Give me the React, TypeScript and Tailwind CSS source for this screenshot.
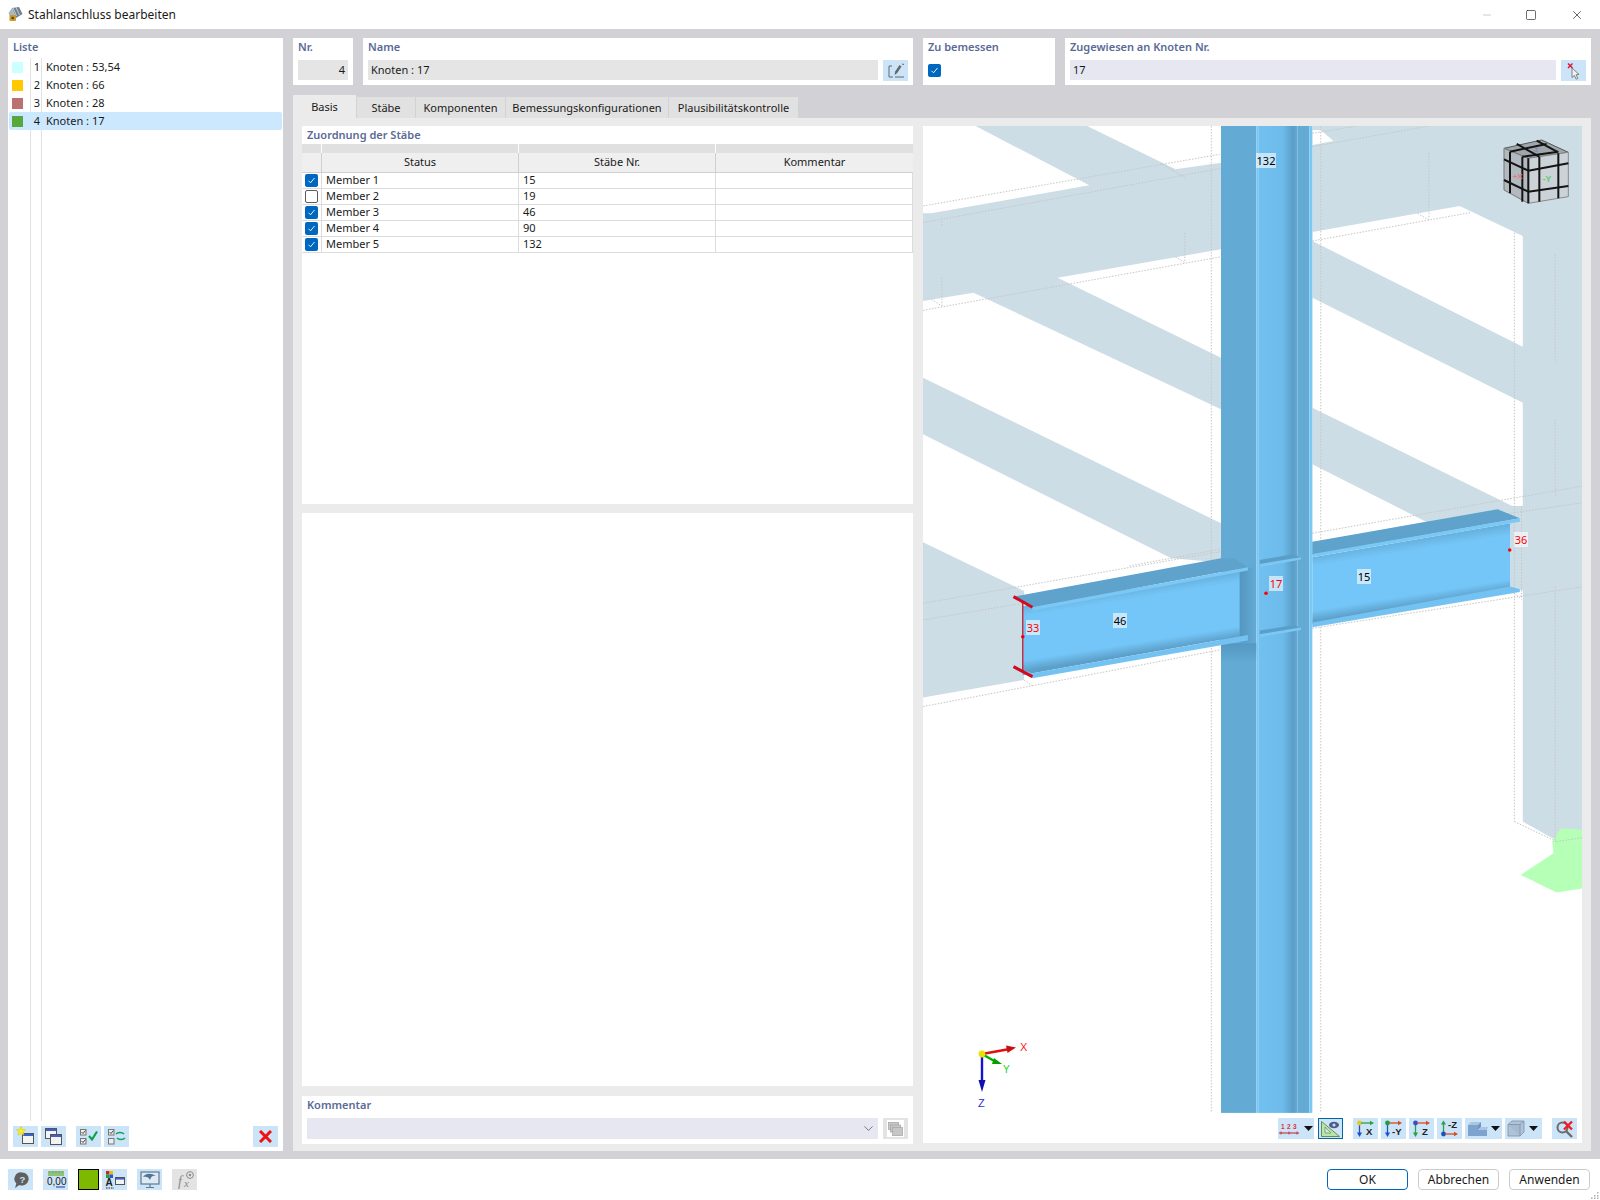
import { FC, ReactNode } from 'react';
import { Minus, Square, X, ChevronDown } from 'lucide-react';

const listItems = [
    { nr: 1, name: 'Knoten : 53,54', color: 'bg-[#ccffff]' },
    { nr: 2, name: 'Knoten : 66', color: 'bg-[#ffc800]' },
    { nr: 3, name: 'Knoten : 28', color: 'bg-[#bc7070]' },
    { nr: 4, name: 'Knoten : 17', color: 'bg-[#56a83c]' },
];

const members = [
    { name: 'Member 1', nr: '15', on: true },
    { name: 'Member 2', nr: '19', on: false },
    { name: 'Member 3', nr: '46', on: true },
    { name: 'Member 4', nr: '90', on: true },
    { name: 'Member 5', nr: '132', on: true },
];

const tabs = [
    { label: 'Basis', w: 'w-[63px]' },
    { label: 'Stäbe', w: 'w-[59px]' },
    { label: 'Komponenten', w: 'w-[90px]' },
    { label: 'Bemessungskonfigurationen', w: 'w-[163px]' },
    { label: 'Plausibilitätskontrolle', w: 'w-[130px]' },
];

const Check: FC<{ on?: boolean }> = ({ on = true }) =>
    on ? (
        <div className="flex h-[13px] w-[13px] items-center justify-center rounded-[2px] bg-[#0067c0]">
            <svg width="9" height="9" viewBox="0 0 9 9" fill="none" stroke="#fff" strokeWidth="0.9">
                <path d="M1.5 4.8 3.5 6.8 7.5 2" />
            </svg>
        </div>
    ) : (
        <div className="h-[13px] w-[13px] rounded-[2px] border border-[#5c5c5c] bg-white" />
    );

const Btn: FC<{ children?: ReactNode; className?: string }> = ({ children, className = 'w-[25px] bg-[#cce4f7]' }) => (
    <div className={`flex h-[21px] shrink-0 items-center justify-center ${className}`}>{children}</div>
);

const Icon: FC<{ children: ReactNode; w?: number }> = ({ children, w = 25 }) => (
    <svg width={w} height="21" viewBox={`0 0 ${w} 21`} fill="none">
        {children}
    </svg>
);

const Win: FC<{ x: number; y: number; w?: number; h?: number }> = ({ x, y, w = 11, h = 10 }) => (
    <g>
        <rect x={x + 0.5} y={y + 0.5} width={w} height={h} fill="#f4f4f4" stroke="#555" />
        <rect x={x + 1} y={y + 1} width={w - 1} height="2" fill="#3f5fd0" />
    </g>
);

// kleine Achsen-Icons in der Ansichtsleiste
const AxisIcon: FC<{ label: string; dot: string; h: string; v: string; up?: boolean }> = ({ label, dot, h, v, up }) => (
    <Icon>
        {up ? (
            <>
                <path d="M6.5 16V5" stroke={v} strokeWidth="1.3" />
                <path d="M6.5 2.5 4 6.5h5z" fill={v} />
                <circle cx="6.5" cy="16" r="2.4" fill={dot} />
                <path d="M8 16h10" stroke={h} strokeWidth="1.3" />
                <path d="M21 16l-4-2.2v4.4z" fill={h} />
            </>
        ) : (
            <>
                <path d="M6.5 5v11" stroke={v} strokeWidth="1.3" />
                <path d="M6.5 19 4 14.5h5z" fill={v} />
                <circle cx="6.5" cy="5" r="2.4" fill={dot} />
                <path d="M8 5h10" stroke={h} strokeWidth="1.3" />
                <path d="M21 5l-4-2.2v4.4z" fill={h} />
            </>
        )}
        <text x={label.length > 1 ? 11 : 13} y={up ? 10 : 17} fontSize="9.5" fontWeight="700" fill="#222" fontFamily="Liberation Sans, sans-serif">
            {label}
        </text>
    </Icon>
);

const Caret = () => (
    <svg width="9" height="5" viewBox="0 0 9 5">
        <path d="M0 0h9L4.5 5z" fill="#111" />
    </svg>
);

const dotted = { stroke: '#c6c6c6', strokeWidth: 1, strokeDasharray: '1.5 1.5', vectorEffect: 'non-scaling-stroke' as const };

const gridLines = [
    '0 240 705 85', '0 290 705 128', '0 553 705 393', '925 22 1030 0', '925 62 1290 -20', '925 345 1300 260',
    '925 1222 1568 1080', '925 1250 1568 1130', '0 1432 708 1277', '0 1482 708 1332', '0 1742 705 1572',
    '925 1507 1568 1382', '490 1320 705 1270',
    '685 0 685 2961', '945 0 945 2961', '1405 320 1405 2087', '1422 1140 1422 1420', '1502 385 1502 710',
    '1502 880 1502 1115', '1502 1382 1502 2147', '45 455 45 540', '45 285 45 300', '622 320 622 410', '1202 80 1202 280',
    '565 112 622 155', '1175 262 1202 282', '600 393 622 410', '20 520 45 540', '1405 2087 1505 2147', '1505 2147 1568 2135',
    '240 1662 262 1682', '1405 1402 1422 1420',
];

const Model = () => (
    <svg width="659" height="987" viewBox="0 0 659 987" className="block">
        <defs>
            <linearGradient id="webCol" x1="0" y1="0" x2="1" y2="0">
                <stop offset="0" stopColor="#70c0f0" />
                <stop offset="0.62" stopColor="#6dbbea" />
                <stop offset="0.88" stopColor="#5b9ec8" />
                <stop offset="1" stopColor="#63abd5" />
            </linearGradient>
            <linearGradient id="web46" gradientUnits="userSpaceOnUse" x1="475" y1="1390" x2="515" y2="1590">
                <stop offset="0" stopColor="#66b0dc" />
                <stop offset="0.16" stopColor="#74c6f8" />
                <stop offset="0.8" stopColor="#74c6f8" />
                <stop offset="0.96" stopColor="#5c9fc9" />
                <stop offset="1" stopColor="#5c9fc9" />
            </linearGradient>
            <linearGradient id="web15" gradientUnits="userSpaceOnUse" x1="1140" y1="1245" x2="1180" y2="1445">
                <stop offset="0" stopColor="#66b0dc" />
                <stop offset="0.16" stopColor="#74c6f8" />
                <stop offset="0.8" stopColor="#74c6f8" />
                <stop offset="0.96" stopColor="#5c9fc9" />
                <stop offset="1" stopColor="#5c9fc9" />
            </linearGradient>
            <linearGradient id="below" x1="0" y1="0" x2="0" y2="1">
                <stop offset="0" stopColor="#4f8fb8" stopOpacity="0.7" />
                <stop offset="1" stopColor="#4f8fb8" stopOpacity="0" />
            </linearGradient>
            <linearGradient id="joint" x1="0" y1="0" x2="1" y2="0">
                <stop offset="0" stopColor="#4f8fb8" stopOpacity="0.75" />
                <stop offset="1" stopColor="#4f8fb8" stopOpacity="0" />
            </linearGradient>
        </defs>

        <g transform="scale(0.4209 0.3333)">
            {/* Hintergrund-Träger */}
            <g fill="#cddde6">
                <polygon points="125,0 390,0 600,130 708,110 708,370 320,455 708,695 708,850 120,500 0,525 0,262 20,262 395,178" />
                <polygon points="0,755 708,1192 708,1310 590,1297 0,925" />
                <polygon points="0,1249 240,1395 240,1662 0,1715" />
                <polygon points="925,0 1568,0 1568,2112 1505,2144 1425,2087 1425,1392 1395,1392 1395,1190 925,1290" />
            </g>
            <g fill="#fff">
                <polygon points="925,12 945,12 975,45 925,57" />
                <polygon points="925,318 1275,240 1425,330 1425,662 925,345" />
                <polygon points="925,515 1425,830 1425,1140 1400,1140 925,845" />
                <polygon points="925,1015 1195,1187 925,1250" />
            </g>

            <polygon points="1495,2147 1515,2107 1568,2112 1568,2287 1505,2300 1420,2247 1498,2182" fill="#b6ffb6" />

            {gridLines.map((l, i) => {
                const [x1, y1, x2, y2] = l.split(' ');
                return <line key={i} x1={x1} y1={y1} x2={x2} y2={y2} {...dotted} />;
            })}

            {/* Stütze */}
            <rect x="708" y="0" width="84" height="2961" fill="#63abd5" />
            <rect x="792" y="0" width="6" height="2961" fill="#7cc8f5" />
            <rect x="798" y="0" width="92" height="2961" fill="url(#webCol)" />
            <rect x="890" y="0" width="28" height="2961" fill="#63abd5" />
            <rect x="918" y="0" width="7" height="2961" fill="#7cc8f5" />

            {/* Steifen */}
            <polygon points="800,1302 882,1284 898,1297 800,1320" fill="#5b9fc9" />
            <polygon points="800,1314 898,1294 898,1301 800,1323" fill="#7cc8f5" />
            <polygon points="800,1514 882,1497 898,1507 800,1530" fill="#5b9fc9" />
            <polygon points="800,1525 898,1505 898,1512 800,1533" fill="#7cc8f5" />
            <rect x="708" y="1552" width="84" height="60" fill="url(#below)" />
            <rect x="752" y="1325" width="40" height="225" fill="url(#joint)" />

            {/* Träger 46 */}
            <polygon points="237,1440 752,1337 752,1532 237,1647" fill="url(#web46)" />
            <polygon points="215,1412 708,1297 740,1297 772,1324 260,1444" fill="#5fa3cc" />
            <polygon points="260,1444 772,1324 772,1334 260,1454" fill="#7cc8f5" />
            <polygon points="215,1622 260,1642 772,1527 772,1544 260,1657 215,1627" fill="#74c2f2" />

            {/* Träger 15 */}
            <polygon points="925,1294 1395,1192 1395,1390 925,1495" fill="url(#web15)" />
            <polygon points="925,1247 1365,1150 1418,1177 925,1287" fill="#5fa3cc" />
            <polygon points="925,1284 1418,1177 1418,1187 925,1294" fill="#7cc8f5" />
            <polygon points="925,1490 1395,1382 1418,1390 1418,1398 925,1504" fill="#74c2f2" />

            {/* Querschnitt rot */}
            <g stroke="#d30a1e" fill="none">
                <line x1="215" y1="1412" x2="260" y2="1444" strokeWidth="3" vectorEffect="non-scaling-stroke" />
                <line x1="215" y1="1622" x2="260" y2="1652" strokeWidth="3" vectorEffect="non-scaling-stroke" />
                <line x1="237" y1="1427" x2="237" y2="1637" strokeWidth="1.2" vectorEffect="non-scaling-stroke" />
            </g>
        </g>

        <circle cx="99.8" cy="510.7" r="1.8" fill="#e00" />
        <circle cx="343" cy="467.3" r="1.8" fill="#f00" />
        <circle cx="586.7" cy="424" r="1.8" fill="#f00" />

        {/* Navigationswürfel */}
        <g transform="translate(567 -6) scale(0.3333)">
            <polygon points="42,85 155,60 235,97 115,115" fill="#9fa7ad" stroke="#555" strokeWidth="3" />
            <polygon points="42,85 115,115 115,250 42,210" fill="#b3babf" stroke="#777" strokeWidth="3" />
            <polygon points="115,115 235,97 235,230 115,250" fill="#ccd3d8" stroke="#888" strokeWidth="3" />
            <g stroke="#141414" strokeWidth="6" fill="none">
                <path d="M115 115v135M148 110v135M205 100v135M60 95v125M97 110v135" />
                <path d="M42 118l73 34M42 180l73 35M115 152l120-22M115 215l120-17" />
                <path d="M60 95l110-23M97 110l108-15M80 72l68 38M140 62l65 35" />
            </g>
            <text x="68" y="178" fontSize="24" fontWeight="700" fill="#e07b85" fontFamily="Liberation Sans, sans-serif">+X</text>
            <text x="158" y="186" fontSize="26" fontWeight="700" fill="#62cc70" fontFamily="Liberation Sans, sans-serif">-Y</text>
            <text x="128" y="97" fontSize="18" fontWeight="700" fill="#7a80c0" fontFamily="Liberation Sans, sans-serif">-Z</text>
        </g>

        {/* Koordinatenachsen */}
        <g fill="none" strokeLinecap="round">
            <line x1="59" y1="928" x2="84" y2="923.5" stroke="#e01010" strokeWidth="2.4" />
            <path d="M93 921.5 83 919.5 84.5 927z" fill="#c81010" />
            <line x1="59" y1="928" x2="73" y2="936" stroke="#00b000" strokeWidth="2.4" />
            <path d="M79 938 71 932 69 938z" fill="#00a000" />
            <line x1="59" y1="928" x2="59" y2="955" stroke="#1414d0" strokeWidth="2.4" />
            <path d="M59 966 55.5 954h7z" fill="#1010b0" />
            <circle cx="59" cy="928" r="3.4" fill="#e8e000" />
        </g>
    </svg>
);

const Label: FC<{ className: string; children: ReactNode; red?: boolean }> = ({ className, children, red }) => (
    <div className={`absolute flex h-[15px] w-[14px] items-center justify-center bg-white/60 text-[11px] leading-none ${red ? 'text-[#ff0000]' : 'text-black'} ${className}`}>
        {children}
    </div>
);

const GroupTitle: FC<{ children: ReactNode; className?: string }> = ({ children, className = '' }) => (
    <div className={`text-[11px] leading-[14px] font-semibold text-[#5a6a96] ${className}`}>{children}</div>
);

export default function App() {
    return (
        <div className="flex h-[1200px] w-[1600px] flex-col overflow-hidden bg-white font-['Noto_Sans','Open_Sans',sans-serif] text-[11px] text-[#1a1a1a]">
            {/* Titelleiste */}
            <div className="flex h-[29px] shrink-0 items-center bg-white pl-[7px]">
                <svg width="16" height="17" viewBox="0 0 16 17" className="mr-[5px]">
                    <path d="M5 2 12 1 15.5 8 9 12z" fill="#70808f" />
                    <path d="M5 2 1.5 7 4 13 9 12z" fill="#aab6c2" />
                    <path d="M6 1.8 9.5 10M9 1.4 12.5 9" stroke="#dbe2e8" strokeWidth="0.8" />
                    <rect x="2.5" y="9" width="6.5" height="6" rx="1" fill="#c99a2e" />
                    <circle cx="5.7" cy="12" r="1.3" fill="#5a4410" />
                </svg>
                <span className="text-[12px]">Stahlanschluss bearbeiten</span>
                <div className="ml-auto flex items-center text-[#222]">
                    <Minus size={12} strokeWidth={1} className="mr-[32px] text-[#999]" />
                    <Square size={12} strokeWidth={1.3} className="mr-[33px]" />
                    <X size={14} strokeWidth={1.2} className="mr-[16px]" />
                </div>
            </div>

            {/* Hauptbereich */}
            <div className="flex min-h-0 flex-1 gap-[10px] bg-[#d2d1d6] pt-[9px] pr-[9px] pb-[8px] pl-[8px]">
                {/* Liste */}
                <div className="flex w-[275px] shrink-0 flex-col bg-white">
                    <GroupTitle className="h-[20px] pt-[2px] pl-[5px]">Liste</GroupTitle>
                    <div className="relative flex-1">
                        <div className="absolute top-0 bottom-[30px] left-[22px] w-px bg-[#e2e2e2]" />
                        <div className="absolute top-0 bottom-[30px] left-[33px] w-px bg-[#e2e2e2]" />
                        {listItems.map(item => (
                            <div
                                key={item.nr}
                                className={`relative mx-px flex h-[18px] items-center rounded-[2px] ${item.nr === 4 ? 'bg-[#cce8ff]' : ''}`}
                            >
                                <div className={`ml-[3px] h-[11px] w-[11px] ${item.color}`} />
                                <span className="w-[17px] text-right">{item.nr}</span>
                                <span className="ml-[6px]">{item.name}</span>
                            </div>
                        ))}
                        <div className="absolute right-[5px] bottom-[4px] left-[5px] flex">
                            <Btn>
                                <Icon>
                                    <Win x={9} y={7} />
                                    <path d="m8 0.5 1.4 3 3.2.3-2.4 2.2.7 3.2-2.9-1.6-2.9 1.6.7-3.2-2.4-2.2 3.2-.3z" fill="#f7ee20" stroke="#c9b400" strokeWidth="0.4" />
                                </Icon>
                            </Btn>
                            <Btn className="ml-[3px] w-[25px] bg-[#cce4f7]">
                                <Icon>
                                    <Win x={4} y={2} />
                                    <Win x={9} y={8} />
                                </Icon>
                            </Btn>
                            <Btn className="ml-[10px] w-[25px] bg-[#cce4f7]">
                                <Icon>
                                    <rect x="4.5" y="3.5" width="5.5" height="5.5" fill="#eee" stroke="#777" />
                                    <rect x="4.5" y="12.5" width="5.5" height="5.5" fill="#eee" stroke="#777" />
                                    <path d="M5.5 6 7 7.5l2.5-3M5.5 15 7 16.5l2.5-3" stroke="#333" strokeWidth="0.9" />
                                    <path d="m13 10 3 3.5 5-8" stroke="#0aa14a" strokeWidth="2.2" />
                                </Icon>
                            </Btn>
                            <Btn className="ml-[3px] w-[25px] bg-[#cce4f7]">
                                <Icon>
                                    <rect x="4.5" y="3.5" width="5.5" height="5.5" fill="#eee" stroke="#777" />
                                    <rect x="4.5" y="12.5" width="5.5" height="5.5" fill="#eee" stroke="#777" />
                                    <path d="M5.5 6 7 7.5l2.5-3" stroke="#333" strokeWidth="0.9" />
                                    <path d="M12 8c2-2 6-2 8 0M21 12c-2 2-6 2-8 0" stroke="#0f9e5a" strokeWidth="1.6" />
                                </Icon>
                            </Btn>
                            <Btn className="ml-auto w-[25px] bg-[#cce4f7]">
                                <svg width="13" height="13" viewBox="0 0 13 13">
                                    <path d="M1 1l11 11M12 1 1 12" stroke="#f01010" strokeWidth="3" />
                                </svg>
                            </Btn>
                        </div>
                    </div>
                </div>

                <div className="flex min-w-0 flex-1 flex-col">
                    {/* Kopfzeile */}
                    <div className="flex h-[47px] shrink-0 gap-[10px]">
                        <div className="w-[60px] bg-white px-[5px]">
                            <GroupTitle className="h-[22px] pt-[2px]">Nr.</GroupTitle>
                            <div className="flex h-[20px] items-center justify-end bg-[#e5e5e5] pr-[3px]">4</div>
                        </div>
                        <div className="w-[550px] bg-white px-[5px]">
                            <GroupTitle className="h-[22px] pt-[2px]">Name</GroupTitle>
                            <div className="flex gap-[5px]">
                                <div className="flex h-[20px] flex-1 items-center bg-[#e5e5e5] pl-[3px]">Knoten : 17</div>
                                <Btn className="h-[20px] w-[25px] bg-[#cce4f7]">
                                    <svg width="18" height="16" viewBox="0 0 18 16" fill="none">
                                        <path d="M5 3H2v11h4M8 14h9" stroke="#666" />
                                        <path d="m7.5 12 .7-3.5L12.5 2l2 1.5-4.3 6.5z" fill="#666" />
                                        <path d="M15 1l2 .5" stroke="#666" />
                                    </svg>
                                </Btn>
                            </div>
                        </div>
                        <div className="w-[132px] bg-white px-[5px]">
                            <GroupTitle className="h-[26px] pt-[2px]">Zu bemessen</GroupTitle>
                            <Check />
                        </div>
                        <div className="w-[526px] bg-white px-[5px]">
                            <GroupTitle className="h-[22px] pt-[2px]">Zugewiesen an Knoten Nr.</GroupTitle>
                            <div className="flex gap-[5px]">
                                <div className="flex h-[20px] flex-1 items-center bg-[#e6e7f1] pl-[3px]">17</div>
                                <Btn className="h-[20px] w-[25px] bg-[#cce4f7]">
                                    <svg width="18" height="18" viewBox="0 0 18 18" fill="none">
                                        <path d="M3 1.5 7.5 6M7.5 1.5 3 6" stroke="#e01030" strokeWidth="1.4" />
                                        <path d="M7 6v9.5l2.4-2 1.8 3.7 1.6-.8-1.8-3.6 3-.4z" fill="#eef2f5" stroke="#6a6a6a" strokeWidth="0.8" />
                                    </svg>
                                </Btn>
                            </div>
                        </div>
                    </div>

                    {/* Reiter */}
                    <div className="mt-[10px] flex h-[23px] shrink-0 items-end">
                        {tabs.map((tab, i) => (
                            <div
                                key={tab.label}
                                className={`flex items-center justify-center pt-[2px] ${tab.w} ${
                                    i === 0 ? 'h-[23px] bg-[#ebebeb]' : 'h-[21px] border-l border-[#d2d1d6] bg-[#e1e1e1]'
                                }`}
                            >
                                {tab.label}
                            </div>
                        ))}
                    </div>

                    {/* Inhalt */}
                    <div className="flex min-h-0 flex-1 gap-[10px] bg-[#ebebeb] pt-[8px] pr-[9px] pb-[7px] pl-[9px]">
                        <div className="flex w-[611px] shrink-0 flex-col">
                            <div className="h-[378px] shrink-0 bg-white">
                                <GroupTitle className="h-[18px] pt-[2px] pl-[5px]">Zuordnung der Stäbe</GroupTitle>
                                <div className="grid grid-cols-[20px_197px_197px_197px]">
                                    <div className="h-[9px] border-r border-white bg-[#e0e0e0]" />
                                    <div className="h-[9px] border-r border-white bg-[#e0e0e0]" />
                                    <div className="h-[9px] border-r border-white bg-[#e0e0e0]" />
                                    <div className="h-[9px] bg-[#e0e0e0]" />
                                    <div className="h-[20px] border-r border-b border-[#cfcfcf] bg-[#efefef]" />
                                    <div className="flex h-[20px] items-center justify-center border-r border-b border-[#cfcfcf] bg-[#efefef]">Status</div>
                                    <div className="flex h-[20px] items-center justify-center border-r border-b border-[#cfcfcf] bg-[#efefef]">Stäbe Nr.</div>
                                    <div className="flex h-[20px] items-center justify-center border-b border-[#cfcfcf] bg-[#efefef]">Kommentar</div>
                                    {members.map(m => (
                                        <div key={m.name} className="contents">
                                            <div className="flex h-[16px] items-center justify-center border-r border-b border-[#dcdcdc]">
                                                <Check on={m.on} />
                                            </div>
                                            <div className="flex h-[16px] items-center border-r border-b border-[#dcdcdc] pl-[4px]">{m.name}</div>
                                            <div className="flex h-[16px] items-center border-r border-b border-[#dcdcdc] pl-[4px]">{m.nr}</div>
                                            <div className="h-[16px] border-r border-b border-[#dcdcdc]" />
                                        </div>
                                    ))}
                                </div>
                            </div>
                            <div className="mt-[9px] min-h-0 flex-1 bg-white" />
                            <div className="mt-[10px] h-[48px] shrink-0 bg-white px-[5px]">
                                <GroupTitle className="h-[22px] pt-[2px]">Kommentar</GroupTitle>
                                <div className="flex gap-[5px]">
                                    <div className="flex h-[21px] flex-1 items-center justify-end bg-[#e6e7f1] pr-[2px]">
                                        <ChevronDown size={15} strokeWidth={1} className="text-[#333]" />
                                    </div>
                                    <Btn className="w-[25px] bg-[#e3e3e3]">
                                        <div className="flex h-[17px] w-[17px] items-center justify-center bg-white">
                                            <svg width="15" height="14" viewBox="0 0 15 14" fill="#c6c6c6" stroke="#a8a8a8" strokeWidth="0.8">
                                                <rect x="0.5" y="0.5" width="10" height="7" />
                                                <rect x="2.5" y="3" width="10" height="7" />
                                                <rect x="4.5" y="5.5" width="10" height="8" />
                                            </svg>
                                        </div>
                                    </Btn>
                                </div>
                            </div>
                        </div>

                        {/* Ansicht */}
                        <div className="relative flex h-[1017px] w-[659px] shrink-0 flex-col bg-white">
                            <Model />
                            <Label className="top-[27px] left-[333px] w-[20px]">132</Label>
                            <Label className="top-[487px] left-[190px]">46</Label>
                            <Label className="top-[443px] left-[434px]">15</Label>
                            <Label red className="top-[450px] left-[346px]">17</Label>
                            <Label red className="top-[494px] left-[103px]">33</Label>
                            <Label red className="top-[406px] left-[591px]">36</Label>
                            <span className="absolute top-[916px] left-[97px] font-['Liberation_Sans',sans-serif] text-[11px] leading-none text-[#ff2020]">X</span>
                            <span className="absolute top-[939px] left-[80px] font-['Liberation_Sans',sans-serif] text-[10px] leading-none text-[#18d018]">Y</span>
                            <span className="absolute top-[972px] left-[55px] font-['Liberation_Sans',sans-serif] text-[11px] leading-none text-[#3030e0]">Z</span>

                            {/* Ansichtsleiste */}
                            <div className="flex pt-[5px] pl-[355px]">
                                <Btn className="w-[36px] justify-start gap-[3px] bg-[#cce4f7] pl-[1px]">
                                    <svg width="22" height="14" viewBox="0 0 22 14">
                                        <text x="2" y="7" fontSize="6.5" fontWeight="700" fill="#e0303a" fontFamily="Liberation Sans, sans-serif" letterSpacing="2.4">123</text>
                                        <path d="M0 11h20" stroke="#c01c28" />
                                        <path d="M2 9.5v3M10 9.5v3M18 9.5v3" stroke="#c01c28" strokeWidth="0.8" />
                                    </svg>
                                    <Caret />
                                </Btn>
                                <Btn className="ml-[4px] w-[25px] border border-[#0067a8] bg-[#cce4f7]">
                                    <svg width="21" height="18" viewBox="0 0 21 18" fill="none">
                                        <path d="M1.5 1.5v15h18z" fill="#b9e6a4" stroke="#6d8a5f" />
                                        <path d="M5 13h6L5 7z" fill="#cce4f7" stroke="#6d8a5f" strokeWidth="0.7" />
                                        <ellipse cx="14" cy="5" rx="5" ry="3.3" fill="#4d5a8a" />
                                        <circle cx="14" cy="5" r="1.6" fill="#cfd6ee" />
                                    </svg>
                                </Btn>
                                <Btn className="ml-[10px] w-[25px] bg-[#cce4f7]">
                                    <AxisIcon label="X" dot="#e8c820" h="#2aa040" v="#1c50c0" />
                                </Btn>
                                <Btn className="ml-[3px] w-[25px] bg-[#cce4f7]">
                                    <AxisIcon label="-Y" dot="#1aa040" h="#d84a20" v="#1c50c0" />
                                </Btn>
                                <Btn className="ml-[3px] w-[25px] bg-[#cce4f7]">
                                    <AxisIcon label="Z" dot="#3050d0" h="#d84a20" v="#2aa040" />
                                </Btn>
                                <Btn className="ml-[3px] w-[25px] bg-[#cce4f7]">
                                    <AxisIcon up label="-Z" dot="#1c50c0" h="#d84a20" v="#2aa040" />
                                </Btn>
                                <Btn className="ml-[3px] w-[37px] justify-start gap-[3px] bg-[#cce4f7] pl-[2px]">
                                    <svg width="21" height="16" viewBox="0 0 21 16">
                                        <path d="M1 4h10v5h9v6H1z" fill="#7ea3cf" />
                                        <path d="M1 4l3-3h10l-3 3z" fill="#a9c4e4" />
                                        <path d="M11 4l3-3v5l-3 3z" fill="#6f94c0" />
                                        <path d="M11 9l3-3h7l-1 3z" fill="#a9c4e4" />
                                    </svg>
                                    <Caret />
                                </Btn>
                                <Btn className="ml-[3px] w-[37px] justify-start gap-[4px] bg-[#cce4f7] pl-[2px]">
                                    <svg width="18" height="17" viewBox="0 0 18 17" fill="#a4b6cc" fillOpacity="0.7" stroke="#7f90a6" strokeWidth="0.8">
                                        <path d="M1 4.5 5 1h12v11l-4 4H1z" />
                                        <path d="M1 4.5h12V16M13 4.5 17 1" />
                                    </svg>
                                    <Caret />
                                </Btn>
                                <Btn className="ml-[10px] w-[25px] bg-[#cce4f7]">
                                    <svg width="20" height="18" viewBox="0 0 20 18" fill="none">
                                        <circle cx="7.5" cy="7.5" r="5" stroke="#6c6c6c" strokeWidth="2" />
                                        <path d="m11 11 6 6" stroke="#6c6c6c" strokeWidth="2.4" />
                                        <path d="m9 1.5 8 8M17 1.5l-8 8" stroke="#ee1c25" strokeWidth="2.4" />
                                    </svg>
                                </Btn>
                            </div>
                        </div>
                    </div>
                </div>
            </div>

            {/* Fusszeile */}
            <div className="relative flex h-[41px] shrink-0 items-start bg-white pt-[10px] pl-[8px]">
                <Btn>
                    <svg width="18" height="18" viewBox="0 0 18 18">
                        <path d="M10 1.5a6.5 6.5 0 1 1-2.6 12.4L3 17l1.3-4.5A6.5 6.5 0 0 1 10 1.5z" fill="#5f5f5f" />
                        <text x="7.4" y="11.6" fontSize="9.5" fontWeight="700" fill="#cce4f7" fontFamily="Liberation Sans, sans-serif">?</text>
                    </svg>
                </Btn>
                <Btn className="ml-[10px] w-[25px] bg-[#cce4f7]">
                    <svg width="22" height="19" viewBox="0 0 22 19">
                        <rect x="3" y="1" width="16" height="5" fill="#8fc27a" />
                        <path d="M5 1v2M8 1v2M11 1v2M14 1v2M17 1v2" stroke="#5f8f50" strokeWidth="0.6" />
                        <text x="2" y="15" fontSize="10" fill="#1a1a1a" fontFamily="Liberation Sans, sans-serif">0,00</text>
                        <path d="M11 17h9" stroke="#2030a0" />
                    </svg>
                </Btn>
                <div className="ml-[10px] h-[21px] w-[21px] border border-black bg-[#7cb900]" />
                <Btn className="ml-[3px] w-[25px] bg-[#cce4f7]">
                    <svg width="20" height="20" viewBox="0 0 20 20">
                        <rect x="1" y="1" width="3.5" height="3.5" fill="#d02020" />
                        <rect x="4.5" y="1" width="3.5" height="3.5" fill="#e8c000" />
                        <rect x="1" y="4.5" width="3.5" height="3.5" fill="#20a040" />
                        <rect x="4.5" y="4.5" width="3.5" height="3.5" fill="#3050d0" />
                        <text x="0.5" y="16" fontSize="10" fontWeight="700" fill="#222" fontFamily="Liberation Sans, sans-serif">A</text>
                        <path d="M1 18h8" stroke="#222" strokeDasharray="1.5 1" />
                        <rect x="10.5" y="7.5" width="9" height="7" fill="#f4f4f4" stroke="#555" />
                        <rect x="11" y="8" width="8" height="1.6" fill="#3f5fd0" />
                    </svg>
                </Btn>
                <Btn className="ml-[10px] w-[25px] bg-[#cce4f7]">
                    <svg width="20" height="18" viewBox="0 0 20 18" fill="none">
                        <rect x="1" y="1" width="18" height="12" fill="#dfe9f2" stroke="#5c7a94" strokeWidth="1.2" />
                        <path d="M3 6c3-4 8-4 13-1-3-1-5 0-6 4-1-3-4-4-7-3z" fill="#4e7596" />
                        <path d="M10 13v3M6 16.5h8" stroke="#5c7a94" strokeWidth="1.2" />
                    </svg>
                </Btn>
                <Btn className="ml-[10px] w-[25px] bg-[#e3e3e3]">
                    <svg width="20" height="20" viewBox="0 0 20 20" fill="none">
                        <text x="3" y="16" fontSize="14" fontStyle="italic" fill="#8a8a8a" fontFamily="Liberation Serif, serif">f</text>
                        <text x="9" y="17" fontSize="11" fontStyle="italic" fill="#8a8a8a" fontFamily="Liberation Serif, serif">x</text>
                        <circle cx="15" cy="5" r="3.4" stroke="#8a8a8a" />
                        <circle cx="15" cy="5" r="1.2" fill="#8a8a8a" />
                    </svg>
                </Btn>
                <div className="ml-auto flex gap-[10px] pr-[10px]">
                    <div className="flex h-[21px] w-[81px] items-center justify-center rounded-[4px] border-[1.5px] border-[#0067c0] bg-white text-[12px]">OK</div>
                    <div className="flex h-[21px] w-[81px] items-center justify-center rounded-[4px] border border-[#cccccc] bg-white text-[12px]">Abbrechen</div>
                    <div className="flex h-[21px] w-[81px] items-center justify-center rounded-[4px] border border-[#cccccc] bg-white text-[12px]">Anwenden</div>
                </div>
                <svg width="9" height="7" viewBox="0 0 9 7" className="absolute right-[1px] bottom-[1px]" fill="#b0b0b0">
                    <rect x="7" y="0" width="1.5" height="1.5" />
                    <rect x="4" y="3" width="1.5" height="1.5" />
                    <rect x="7" y="3" width="1.5" height="1.5" />
                    <rect x="1" y="5.5" width="1.5" height="1.5" />
                    <rect x="4" y="5.5" width="1.5" height="1.5" />
                    <rect x="7" y="5.5" width="1.5" height="1.5" />
                </svg>
            </div>
        </div>
    );
}
